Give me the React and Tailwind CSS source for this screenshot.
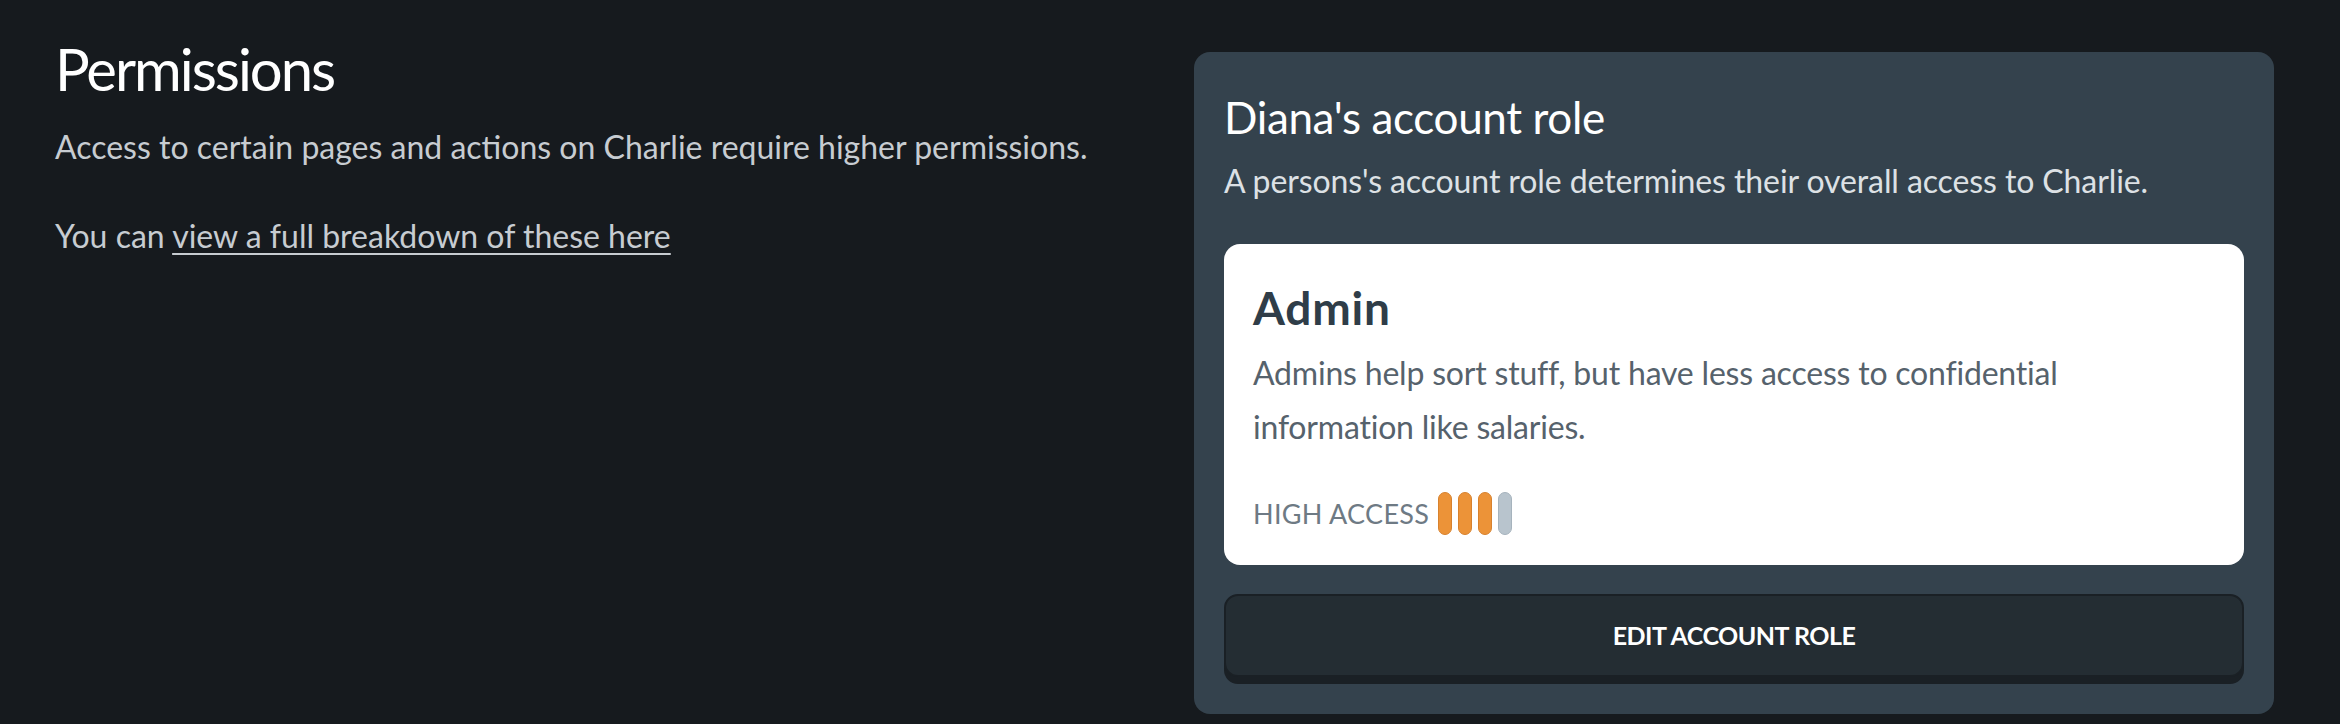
import React from "react";

const font = { fontFamily: '"Lato", "Noto Sans", sans-serif' };

function AccessBars() {
  return (
    <div className="ml-[9px] flex gap-[6px]">
      <span className="h-[43px] w-[14px] rounded-full border border-[#d8822e] bg-[#ec9338]" />
      <span className="h-[43px] w-[14px] rounded-full border border-[#d8822e] bg-[#ec9338]" />
      <span className="h-[43px] w-[14px] rounded-full border border-[#d8822e] bg-[#ec9338]" />
      <span className="h-[43px] w-[14px] rounded-full border border-[#a6b3bd] bg-[#b8c4cd]" />
    </div>
  );
}

export default function App() {
  return (
    <div
      className="flex min-h-[724px] w-full items-start bg-[#161a1e] pl-[55px] pr-[66px] pt-[37px]"
      style={font}
    >
      <div className="flex-1">
        <h1 className="text-[58px] leading-[64px] font-normal tracking-[-2px] text-white">
          Permissions
        </h1>
        <p className="mt-[26px] text-[32px] leading-[40px] tracking-[0px] text-[#c7ccd1]">
          Access to certain pages and actions on Charlie require higher permissions.
        </p>
        <p className="mt-[49px] text-[32px] leading-[40px] tracking-[0px] text-[#c7ccd1]">
          You can{" "}
          <a href="#" className="underline decoration-2 underline-offset-[5px]">
            view a full breakdown of these here
          </a>
        </p>
      </div>

      <div className="mt-[15px] w-[1080px] shrink-0 rounded-[16px] bg-[#34424d] px-[30px] pb-[37px] pt-[39px]">
        <h2 className="text-[44px] leading-[52px] font-normal tracking-[-0.35px] text-white">
          Diana's account role
        </h2>
        <p className="mt-[18px] text-[32px] leading-[40px] tracking-[-0.1px] text-[#dde1e5]">
          A persons's account role determines their overall access to Charlie.
        </p>

        <div className="mt-[43px] rounded-[16px] bg-white pb-[30px] pl-[29px] pr-[29px] pt-[37px]">
          <h3 className="text-[46px] leading-[54px] font-bold tracking-[0.8px] text-[#2f3d48]">
            Admin
          </h3>
          <p className="mt-[11px] max-w-[820px] text-[32px] leading-[54px] tracking-[-0.2px] text-[#56626c]">
            Admins help sort stuff, but have less access to confidential information like salaries.
          </p>
          <div className="mt-[38px] flex items-center">
            <span className="text-[27px] leading-[30px] tracking-[0.3px] text-[#6e7a84]">
              HIGH ACCESS
            </span>
            <AccessBars />
          </div>
        </div>

        <button
          type="button"
          className="mt-[29px] flex h-[83px] w-full items-center justify-center rounded-[14px] border-2 border-[#1a2025] bg-[#242d33] shadow-[0_7px_0_#1a2025]"
        >
          <span className="text-[25px] font-bold tracking-[-0.5px] text-white">
            EDIT ACCOUNT ROLE
          </span>
        </button>
      </div>
    </div>
  );
}
